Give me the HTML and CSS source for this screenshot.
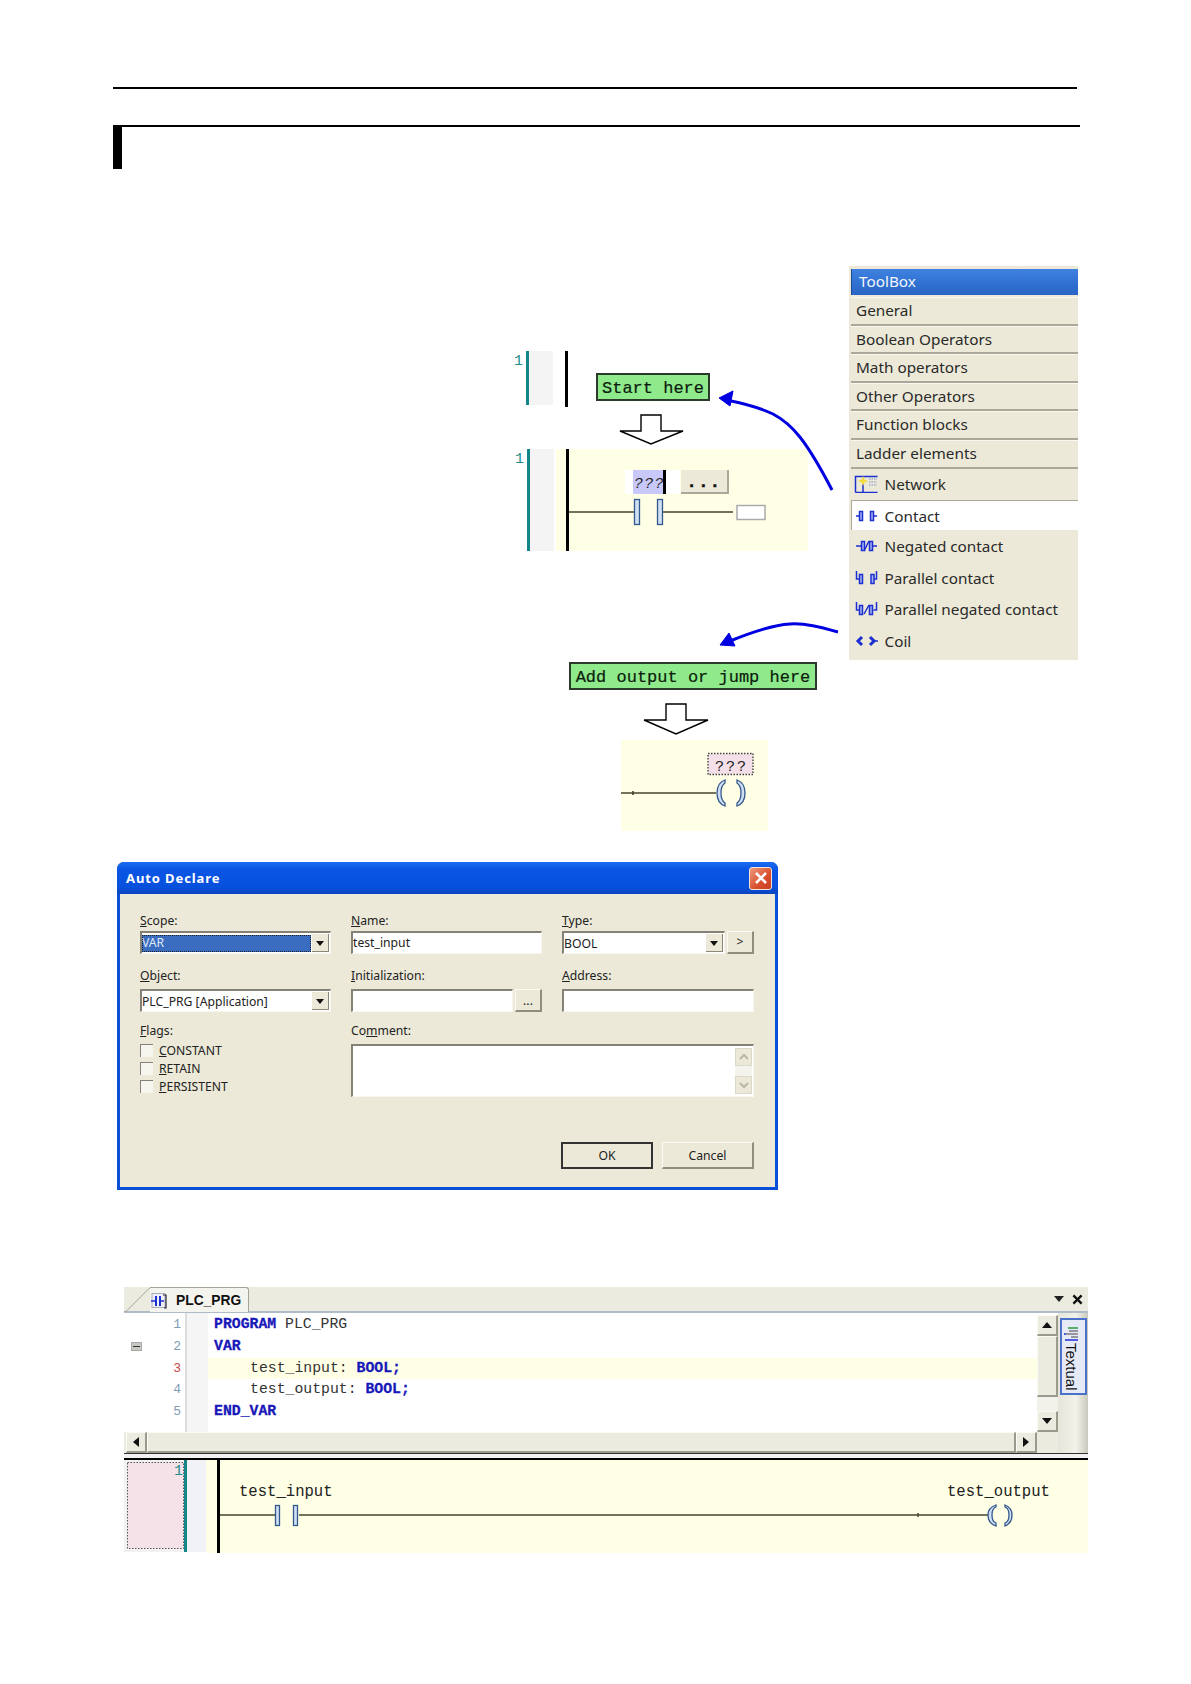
FILE: index.html
```html
<!DOCTYPE html>
<html lang="en">
<head>
<meta charset="utf-8">
<title>Ladder editor manual page</title>
<link rel="stylesheet" href="styles.css">
</head>
<body>
<main class="page">
  <div class="top-rule"></div>
  <div class="section-head"><div class="section-mark"></div></div>

  <section class="figure">
    <svg class="figure-art" viewBox="113 264 965 576" width="965" height="576">
      <!-- first ladder -->
      <rect x="529" y="351" width="24" height="54" fill="#f4f4f4"/>
      <rect x="526" y="351" width="3" height="54" fill="#14868a"/>
      <rect x="565" y="351" width="3" height="56" fill="#000"/>
      <text class="net-no" x="514" y="365">1</text>
      <path d="M641 415h20v16h22l-32 13-31-13h21z" fill="#fff" stroke="#000" stroke-width="1.4"/>
      <!-- second ladder -->
      <rect x="556" y="449" width="252" height="102" fill="#ffffe6"/>
      <rect x="530" y="449" width="24" height="102" fill="#f4f4f4"/>
      <rect x="527" y="449" width="3" height="102" fill="#14868a"/>
      <rect x="566" y="449" width="3" height="102" fill="#000"/>
      <text class="net-no" x="515" y="463">1</text>
      <rect x="625" y="470" width="55" height="24" fill="#fff"/>
      <rect x="633" y="470" width="31" height="24" fill="#c8c8fa"/>
      <rect x="663" y="470" width="3" height="24" fill="#000"/>
      <text class="qmarks" x="634" y="488">???</text>
      <path d="M569 512h65M663 512h70" stroke="#45452e" stroke-width="1.6" fill="none"/>
      <rect class="contact" x="634.5" y="499.5" width="5" height="25"/>
      <rect class="contact" x="657.5" y="499.5" width="5" height="25"/>
      <rect x="737" y="505.500" width="28" height="14" fill="#fff" stroke="#aaa" stroke-width="1.5"/>
      <!-- arrows from toolbox -->
      <path d="M832 490C806 440 792 424 773 414 758 407 742 403 726 400" fill="none" stroke="#0000e0" stroke-width="3"/>
      <path d="M719 398l14-7-3 15z" fill="#0000e0" stroke="#0000e0"/>
      <path d="M838 632C820 627 805 623 790 624 772 625 752 632 730 641" fill="none" stroke="#0000e0" stroke-width="3"/>
      <path d="M720 645l9-12 6 13z" fill="#0000e0" stroke="#0000e0"/>
      <path d="M666 704h20v16h22l-32 14-32-14h22z" fill="#fff" stroke="#000" stroke-width="1.4"/>
      <!-- third ladder -->
      <rect x="621" y="740" width="147" height="91" fill="#ffffe6"/>
      <rect x="708" y="753.500" width="45" height="21" fill="#f4e0e8" stroke="#444" stroke-width="1.4" stroke-dasharray="1.500 1.500"/>
      <text class="qmarks qmarks-plain" x="715" y="771">???</text>
      <path d="M621 793h95M633 791v4" stroke="#45452e" stroke-width="1.6" fill="none"/>
      <path class="contact" d="M725 780c-6 2-8 7-8 13s2 11 8 13v-3c-3-2-4-5-4-10s1-8 4-10z"/>
      <path class="contact" d="M737 780c6 2 8 7 8 13s-2 11-8 13v-3c3-2 4-5 4-10s-1-8-4-10z"/>
    </svg>

    <div class="hint hint-start">Start here</div>
    <div class="ellipsis-btn">...</div>
    <div class="hint hint-output">Add output or jump here</div>

    <aside class="toolbox">
      <div class="toolbox-title">ToolBox</div>
      <div class="tool-group">General</div>
      <div class="tool-group">Boolean Operators</div>
      <div class="tool-group">Math operators</div>
      <div class="tool-group">Other Operators</div>
      <div class="tool-group">Function blocks</div>
      <div class="tool-group">Ladder elements</div>
      <div class="tool-item">
        <svg class="tool-icon" viewBox="0 0 24 18"><path d="M1.500 17.500h22M1.500 17.500V1.500h22M9 17V8" fill="none" stroke="#1c2fd0" stroke-width="1.500"/><path d="M9 1l1.500 3.500L14 6l-3.500 1.500L9 11 7.500 7.500 4 6l3.500-1.500z" fill="#f2dc40"/><path d="M15 4h8M15 7h8M15 10h8" stroke="#7d8fd0" stroke-dasharray="1.500 1"/></svg>
        <span>Network</span>
      </div>
      <div class="tool-item tool-item-active">
        <svg class="tool-icon" viewBox="0 0 24 18"><path class="ico" d="M2 9h3M20 9h3"/><rect class="ico-bar" x="5.500" y="4.500" width="3" height="9"/><rect class="ico-bar" x="16.500" y="4.500" width="3" height="9"/></svg>
        <span>Contact</span>
      </div>
      <div class="tool-item">
        <svg class="tool-icon" viewBox="0 0 24 18"><path class="ico" d="M2 9h5M19 9h4M10 14l5-10"/><rect class="ico-bar" x="7.500" y="4.500" width="3" height="9"/><rect class="ico-bar" x="15.500" y="4.500" width="3" height="9"/></svg>
        <span>Negated contact</span>
      </div>
      <div class="tool-item">
        <svg class="tool-icon" viewBox="0 0 24 18"><path class="ico" d="M2.500 2v8h3M22.500 2v8h-3"/><rect class="ico-bar" x="5.500" y="5.500" width="3" height="9"/><rect class="ico-bar" x="17" y="5.500" width="3" height="9"/></svg>
        <span>Parallel contact</span>
      </div>
      <div class="tool-item">
        <svg class="tool-icon" viewBox="0 0 24 18"><path class="ico" d="M2.500 2v8h3M22.500 2v8h-3M10 14l5-9"/><rect class="ico-bar" x="5.500" y="5.500" width="3" height="9"/><rect class="ico-bar" x="15.500" y="5.500" width="3" height="9"/></svg>
        <span>Parallel negated contact</span>
      </div>
      <div class="tool-item">
        <svg class="tool-icon" viewBox="0 0 24 18"><path class="ico ico-thick" d="M8 5L4 9l4 4M16 5l4 4-4 4"/><path class="ico" d="M20 9h4"/></svg>
        <span>Coil</span>
      </div>
    </aside>
  </section>

  <section class="dialog">
    <header class="dialog-title">
      <span>Auto Declare</span>
      <div class="dialog-close"><svg viewBox="0 0 16 16" width="16" height="16"><path d="M3 3l10 10M13 3L3 13" stroke="#fff" stroke-width="2.600"/></svg></div>
    </header>
    <div class="dialog-body">
      <div class="form-row form-row-1">
        <div class="field">
          <label><u>S</u>cope:</label>
          <div class="input combo combo-focus"><span class="combo-text">VAR</span><i class="combo-btn"></i></div>
        </div>
        <div class="field">
          <label><u>N</u>ame:</label>
          <div class="input">test_input</div>
        </div>
        <div class="field">
          <label><u>T</u>ype:</label>
          <div class="input-line">
            <div class="input combo grow"><span class="combo-text">BOOL</span><i class="combo-btn"></i></div>
            <div class="btn btn-small">&gt;</div>
          </div>
        </div>
      </div>
      <div class="form-row form-row-2">
        <div class="field">
          <label><u>O</u>bject:</label>
          <div class="input combo"><span class="combo-text">PLC_PRG [Application]</span><i class="combo-btn"></i></div>
        </div>
        <div class="field">
          <label><u>I</u>nitialization:</label>
          <div class="input-line">
            <div class="input grow"></div>
            <div class="btn btn-small btn-dots">...</div>
          </div>
        </div>
        <div class="field">
          <label><u>A</u>ddress:</label>
          <div class="input"></div>
        </div>
      </div>
      <div class="form-row form-row-3">
        <div class="field">
          <label><u>F</u>lags:</label>
          <div class="check"><i></i><span><u>C</u>ONSTANT</span></div>
          <div class="check"><i></i><span><u>R</u>ETAIN</span></div>
          <div class="check"><i></i><span><u>P</u>ERSISTENT</span></div>
        </div>
        <div class="field field-wide">
          <label>Co<u>m</u>ment:</label>
          <div class="input comment">
            <div class="comment-scroll">
              <div class="mini-btn"><svg viewBox="0 0 12 8" width="12" height="8"><path d="M2 6l4-4 4 4" fill="none" stroke="#b9b7a8" stroke-width="2"/></svg></div>
              <div class="mini-btn"><svg viewBox="0 0 12 8" width="12" height="8"><path d="M2 2l4 4 4-4" fill="none" stroke="#b9b7a8" stroke-width="2"/></svg></div>
            </div>
          </div>
        </div>
      </div>
      <div class="dialog-actions">
        <div class="btn btn-action btn-default">OK</div>
        <div class="btn btn-action">Cancel</div>
      </div>
    </div>
  </section>

  <section class="editor">
    <div class="tabstrip">
      <div class="tab">
        <svg class="tab-slant" viewBox="0 0 26 24" width="26" height="24"><path d="M0 23.500h2L25 0.500h1" fill="none" stroke="#a0a59a"/></svg>
        <svg class="tab-icon" viewBox="0 0 16 16" width="16" height="16"><rect x="1" y="0.500" width="13" height="14" fill="#eef0f8" stroke="#aab"/><path d="M0 8h5M9 8h4" stroke="#1c2fd0" stroke-width="1.400"/><path d="M5 3v10M9 3v10" stroke="#1c2fd0" stroke-width="2"/><path d="M12 2h3v13h-2" fill="none" stroke="#223" stroke-width="1.200"/></svg>
        <span>PLC_PRG</span>
      </div>
      <div class="tab-tools">
        <svg viewBox="0 0 10 6" width="10" height="6"><path d="M0 0h10L5 6z" fill="#222"/></svg>
        <svg viewBox="0 0 12 12" width="11" height="11"><path d="M1.500 1.500l9 9M10.500 1.500l-9 9" stroke="#111" stroke-width="2.600"/></svg>
      </div>
    </div>
    <div class="editor-main">
      <div class="code-col">
        <div class="code-body">
          <div class="fold-col"><div class="fold"></div></div>
          <div class="line-nos">
            <div>1</div><div>2</div><div class="line-no-active">3</div><div>4</div><div>5</div>
          </div>
          <div class="gutter"></div>
          <div class="code">
            <div class="code-line"><b>PROGRAM</b> PLC_PRG</div>
            <div class="code-line"><b>VAR</b></div>
            <div class="code-line code-line-hl indent">test_input: <b>BOOL;</b></div>
            <div class="code-line indent">test_output: <b>BOOL;</b></div>
            <div class="code-line"><b>END_VAR</b></div>
          </div>
        </div>
        <div class="hscroll">
          <div class="scroll-btn"><svg viewBox="0 0 6 10" width="6" height="10"><path d="M6 0v10L0 5z" fill="#111"/></svg></div>
          <div class="scroll-thumb"></div>
          <div class="scroll-btn"><svg viewBox="0 0 6 10" width="6" height="10"><path d="M0 0v10l6-5z" fill="#111"/></svg></div>
        </div>
      </div>
      <div class="vscroll">
        <div class="scroll-btn v"><svg viewBox="0 0 10 6" width="10" height="6"><path d="M0 6h10L5 0z" fill="#111"/></svg></div>
        <div class="vthumb"></div>
        <div class="vtrack"></div>
        <div class="scroll-btn v"><svg viewBox="0 0 10 6" width="10" height="6"><path d="M0 0h10L5 6z" fill="#111"/></svg></div>
        <div class="vcorner"></div>
      </div>
      <div class="side-panel">
        <div class="side-tab">
          <svg viewBox="0 0 16 17" width="16" height="17"><path d="M1 9h2" stroke="#1c2fd0" stroke-width="1.500"/><path d="M5 3h10" stroke="#2a9a40" stroke-width="1.500"/><path d="M6 6h9M3 9h12M8 12h7" stroke="#444" stroke-width="1.200"/><path d="M2 15h13" stroke="#1c2fd0" stroke-width="1.500"/></svg>
          <span>Textual</span>
        </div>
      </div>
    </div>
    <div class="ladder">
      <svg viewBox="124 1459 964 93" width="964" height="93">
        <rect x="206" y="1459" width="882" height="93" fill="#ffffe6"/>
        <rect x="127.500" y="1461.500" width="56" height="86" fill="#f5e1e8" stroke="#555" stroke-dasharray="1.500 1.500"/>
        <rect x="187" y="1459" width="19" height="92" fill="#f0f2f6"/>
        <rect x="184" y="1459" width="3" height="92" fill="#14868a"/>
        <rect x="217" y="1459" width="3" height="93" fill="#000"/>
        <text class="net-no" x="174" y="1474">1</text>
        <text class="ladder-var" x="239" y="1495">test_input</text>
        <text class="ladder-var" x="947" y="1495">test_output</text>
        <path d="M220 1514h55M299 1514h689M918 1512v4" stroke="#45452e" stroke-width="1.400" fill="none"/>
        <rect class="contact" x="275.500" y="1504.500" width="4" height="20"/>
        <rect class="contact" x="293.500" y="1504.500" width="4" height="20"/>
        <path class="contact" d="M996 1504c-6 2-8 5-8 10s2 9 8 11v-3c-3-1-4-4-4-8s1-7 4-8z"/>
        <path class="contact" d="M1005 1504c5 2 7 5 7 10s-2 9-7 11v-3c3-1 4-4 4-8s-1-7-4-8z"/>
      </svg>
    </div>
  </section>
</main>
</body>
</html>
```
FILE: styles.css
```css
* { box-sizing: border-box; }
html, body { margin: 0; padding: 0; background: #fff; }
.page {
  width: 1191px;
  height: 1684px;
  padding: 87px 0 0 113px;
  overflow: hidden;
  font-family: "Noto Sans", "Liberation Sans", sans-serif;
  color: #1c1c1c;
}
.top-rule { width: 964px; height: 2px; background: #000; }
.section-head { width: 967px; margin-top: 36px; border-top: 2px solid #000; }
.section-mark { width: 9px; height: 42px; background: #000; }

/* ---------- diagram figure ---------- */
.figure {
  position: relative;
  width: 965px;
  height: 576px;
  margin-top: 95px;
  display: flex;
  justify-content: flex-end;
  align-items: flex-start;
}
.figure-art { position: absolute; left: 0; top: 0; }
.net-no { font: 15px "Liberation Mono", monospace; fill: #1f8f8c; }
.qmarks { font: italic 15px "Liberation Mono", monospace; letter-spacing: 1.200px; fill: #222; }
.qmarks-plain { font-style: normal; letter-spacing: 2px; }
.contact { fill: #cfdff4; stroke: #34588c; stroke-width: 1.300; }
.ladder-var { font: 15.600px "Liberation Mono", monospace; fill: #222; -webkit-text-stroke: .2px #222; }
.hint {
  position: absolute;
  height: 28px;
  background: #8fea8c;
  border: 2px solid #2c3a2c;
  font: 17px/27px "Liberation Mono", monospace;
  -webkit-text-stroke: .2px #0c1c0c;
  color: #0c1c0c;
  text-align: center;
  white-space: nowrap;
}
.hint-start { left: 483px; top: 109px; width: 114px; }
.hint-output { left: 456px; top: 398px; width: 248px; }
.ellipsis-btn {
  position: absolute;
  left: 568px;
  top: 206px;
  width: 48px;
  height: 24px;
  background: #ece9d8;
  border-right: 2px solid #aca899;
  border-bottom: 2px solid #aca899;
  font: bold 17px/26px "Liberation Mono", monospace;
  -webkit-text-stroke: .5px #111;
  letter-spacing: 1.500px;
  text-align: center;
  color: #111;
}

/* ---------- toolbox ---------- */
.toolbox {
  position: relative;
  width: 229px;
  height: 394px;
  margin-top: 2px;
  padding: 3px 0 0 2px;
  background: #ece9d8;
  display: flex;
  flex-direction: column;
  font-size: 15.300px;
  color: #2a2a2a;
}
.toolbox-title {
  height: 26px;
  margin-bottom: 2px;
  padding-left: 7px;
  background: linear-gradient(#3f82e0, #2f6fd0 60%, #2a64c4);
  border-left: 1px solid #1d4a96;
  color: #f4f6fc;
  line-height: 25px;
}
.tool-group {
  height: 28.600px;
  padding-left: 5px;
  border-top: 1px solid #f8f7f0;
  border-bottom: 2px solid #aca899;
  line-height: 24px;
  white-space: nowrap;
}
.tool-item {
  height: 31.600px;
  padding-left: 3px;
  display: flex;
  align-items: center;
  gap: 6.500px;
  white-space: nowrap;
}
.tool-item-active {
  height: 30px;
  background: #fff;
  border-top: 1px solid #aca899;
  border-left: 1px solid #aca899;
}
.tool-item-active .tool-icon { margin-left: -1px; }
.tool-icon { width: 24px; height: 18px; flex: none; }
.ico { fill: none; stroke: #1c2fd0; stroke-width: 1.500; }
.ico-thick { stroke-width: 3; }
.ico-bar { fill: #a8b6ee; stroke: #1c2fd0; stroke-width: 1.500; }

/* ---------- dialog ---------- */
.dialog {
  width: 661px;
  height: 328px;
  margin: 22px 0 0 4px;
  padding: 0 3px 3px;
  background: #0a4fd8;
  border-radius: 7px 7px 0 0;
  display: flex;
  flex-direction: column;
  font-size: 12.200px;
  color: #222;
}
.dialog-title {
  height: 32px;
  margin: 0 -3px;
  padding: 0 6px 0 9px;
  display: flex;
  align-items: center;
  justify-content: space-between;
  background: linear-gradient(#1a6cf0, #0a55e4 25%, #0650dc 80%, #0a44bc);
  border-radius: 7px 7px 0 0;
  color: #fff;
  font-size: 13px;
  font-weight: 700;
  letter-spacing: .9px;
}
.dialog-close {
  width: 23px;
  height: 23px;
  border: 1px solid #f4e4da;
  border-radius: 3px;
  background: linear-gradient(135deg, #ee9a7c, #d8502c 60%, #c84020);
  display: flex;
  align-items: center;
  justify-content: center;
}
.dialog-body {
  flex: 1;
  background: #ece9d8;
  padding: 17px 21px 0 20px;
  display: flex;
  flex-direction: column;
}
.form-row {
  display: grid;
  grid-template-columns: 191px 191px 192px;
  column-gap: 20px;
}
.form-row-2 { margin-top: 14px; }
.form-row-3 { margin-top: 11px; }
.form-row-1 label { padding-top: 2px; }
.field { display: flex; flex-direction: column; min-width: 0; }
.field-wide { grid-column: span 2; }
.field label { height: 20px; line-height: 16px; }
.form-row-2 .input, .form-row-2 .btn { margin-top: 1px; }
.form-row-3 .input { margin-top: 1px; }
.input {
  height: 23px;
  background: #fff;
  border-style: solid;
  border-width: 2px 1px 1px 2px;
  border-color: #848276 #f8f7f0 #f8f7f0 #848276;
  line-height: 19px;
  white-space: nowrap;
  overflow: hidden;
}
.combo { display: flex; align-items: center; justify-content: space-between; padding-right: 1px; }
.combo-text { flex: 1; }
.combo-focus .combo-text {
  height: 17px;
  line-height: 16px;
  background: #3a6cc0;
  color: #dfe8f8;
  outline: 1px dotted #222;
  outline-offset: -1px;
}
.combo-btn {
  width: 17px;
  height: 18px;
  flex: none;
  margin-left: 1px;
  background: #ece9d8;
  border-right: 1px solid #8a887a;
  border-bottom: 1px solid #8a887a;
  position: relative;
}
.combo-btn::after {
  content: "";
  position: absolute;
  left: 4px;
  top: 7px;
  border-style: solid;
  border-width: 5px 4px 0;
  border-color: #111 transparent transparent;
}
.input-line { display: flex; gap: 2px; }
.grow { flex: 1; min-width: 0; }
.btn {
  background: #ece9d8;
  border-style: solid;
  border-width: 1px 2px 2px 1px;
  border-color: #fbfaf4 #8f8d7e #8f8d7e #fbfaf4;
  text-align: center;
}
.btn-small { width: 27px; height: 23px; flex: none; line-height: 20px; }
.btn-dots { line-height: 22px; }
.check { display: flex; align-items: center; gap: 6px; height: 18px; }
.field .check:first-of-type { margin-top: -2px; }
.check i {
  width: 13px;
  height: 13px;
  flex: none;
  background: #f6f5ee;
  border-style: solid;
  border-width: 1px 0 0 1px;
  border-color: #84827a;
}
.comment { height: 53px; display: flex; justify-content: flex-end; padding: 2px 1px 2px 0; }
.comment-scroll { width: 17px; display: flex; flex-direction: column; justify-content: space-between; background: #f4f3ec; }
.mini-btn { height: 18px; background: #ece9d8; border: 1px solid #dad8ca; display: flex; align-items: center; justify-content: center; }
.dialog-actions { margin-top: auto; margin-bottom: 18px; display: flex; justify-content: flex-end; gap: 9px; }
.btn-action { width: 92px; height: 27px; line-height: 25px; }
.btn-default { border: 2px solid #333; line-height: 24px; }

/* ---------- editor ---------- */
.editor { width: 964px; margin: 97px 0 0 11px; }
.tabstrip {
  height: 26px;
  background: #ecebe0;
  border-bottom: 2px solid #b0bdc8;
  padding-left: 26px;
  display: flex;
  justify-content: space-between;
}
.tab {
  position: relative;
  width: 99px;
  height: 25px;
  padding: 1px 0 0 1px;
  background: #f4f4ee;
  border: 1px solid #a0a59a;
  border-bottom: 0;
  border-left: 0;
  border-radius: 0 3px 0 0;
  display: flex;
  align-items: center;
  gap: 9px;
  font: bold 13.800px "Liberation Sans", sans-serif;
  color: #111;
}
.tab-slant { position: absolute; left: -26px; top: 0; }
.tab-tools { display: flex; align-items: center; gap: 8px; padding-right: 5px; }
.editor-main { height: 140px; display: flex; background: #fff; }
.code-col { flex: 1; min-width: 0; display: flex; flex-direction: column; }
.code-body { flex: 1; display: flex; }
.fold-col { width: 25px; padding: 29px 0 0 7px; flex: none; }
.fold { width: 11px; height: 9px; background: #c8c8c0; border: 1px solid #aaa; position: relative; }
.fold::after { content: ""; position: absolute; left: 1px; right: 1px; top: 3px; height: 1px; background: #333; }
.line-nos {
  width: 36px;
  flex: none;
  padding: 1px 4px 0 0;
  text-align: right;
  font: 13px/21.800px "Liberation Mono", monospace;
  color: #7f9db4;
}
.line-no-active { color: #c04848; }
.gutter { width: 23px; flex: none; background: #f5f5f5; border-left: 2px solid #dcdcdc; }
.code { flex: 1; min-width: 0; font: 14.800px/21.800px "Liberation Mono", monospace; color: #333; padding-top: 1px; }
.code b { color: #1818b8; -webkit-text-stroke: .3px #1818b8; }
.code-line { height: 21.800px; padding-left: 6px; white-space: pre; }
.code-line-hl { background: #ffffe6; }
.indent { padding-left: 42px; }
.hscroll { height: 21px; flex: none; display: flex; padding-left: 2px; background: #ecebe0; }
.scroll-btn {
  width: 21px;
  flex: none;
  background: #ecebe0;
  border-style: solid;
  border-width: 1px 2px 2px 1px;
  border-color: #fbfaf4 #9c9a8c #9c9a8c #fbfaf4;
  display: flex;
  align-items: center;
  justify-content: center;
}
.scroll-thumb {
  flex: 1;
  background: #ecebe0;
  border-style: solid;
  border-width: 1px 2px 2px 1px;
  border-color: #fbfaf4 #9c9a8c #9c9a8c #fbfaf4;
}
.vscroll { width: 21px; flex: none; display: flex; flex-direction: column; padding-top: 2px; }
.scroll-btn.v { width: 21px; height: 21px; }
.vthumb {
  height: 61px;
  background: #ecebe0;
  border-style: solid;
  border-width: 1px 2px 2px 1px;
  border-color: #fbfaf4 #9c9a8c #9c9a8c #fbfaf4;
}
.vtrack { height: 14px; background: #f2f1ea; }
.vcorner { flex: 1; background: #ecebe0; }
.side-panel {
  width: 30px;
  flex: none;
  padding: 5px 1px 0 2px;
  background: linear-gradient(90deg, #e6e5da, #f2f2ea 60%, #c8c8bc);
}
.side-tab {
  height: 77px;
  padding: 5px 0 0 1px;
  background: #e6eaf6;
  border: 2px solid #4a72c8;
  display: flex;
  flex-direction: column;
  align-items: flex-start;
  gap: 1px;
  overflow: hidden;
  font: 15px/16px "Liberation Sans", sans-serif;
  color: #111;
}
.side-tab svg { flex: none; }
.side-tab span { writing-mode: vertical-rl; }
.ladder {
  height: 99px;
  padding-top: 6px;
  background: #f2f2f2;
  border-top: 1px solid #333;
  position: relative;
}
.ladder::before {
  content: "";
  position: absolute;
  left: 0;
  right: 0;
  top: 4px;
  height: 2px;
  background: #000;
}
.ladder svg { display: block; }
```
